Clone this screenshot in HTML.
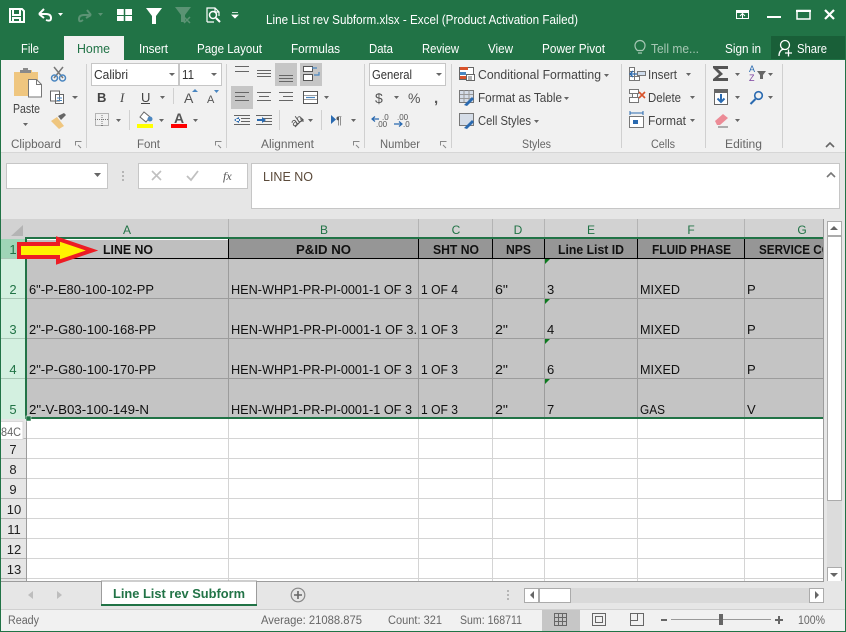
<!DOCTYPE html>
<html><head><meta charset="utf-8"><title>Line List rev Subform.xlsx - Excel</title>
<style>
html,body{margin:0;padding:0;background:#f1f1f1;width:846px;height:632px;overflow:hidden}
svg{display:block;font-family:"Liberation Sans",sans-serif}
text{white-space:pre}
.w{fill:#fff;font-size:12.500px}
.u{fill:#444;font-size:12.500px}
.l{fill:#666;font-size:11.500px}
.h{fill:#111;font-size:13px;font-weight:bold}
.c{fill:#111;font-size:13px}
.ch{fill:#217346;font-size:12px;text-anchor:middle}
.rh{fill:#222;font-size:13px;text-anchor:middle}
.rs{fill:#217346;font-size:13px;text-anchor:middle}
.g{fill:#666}
</style></head><body>
<svg width="846" height="632" viewBox="0 0 846 632" xmlns="http://www.w3.org/2000/svg">
<defs><clipPath id="gc"><rect x="27" y="239" width="796" height="180"/></clipPath></defs>
<rect width="846" height="632" fill="#f1f1f1"/>
<!-- title bar -->
<rect width="846" height="60" fill="#217346"/>
<rect x="64" y="36" width="60" height="24" fill="#f1f1f1"/>
<rect x="771" y="36" width="74" height="23" fill="#195f38"/>
<!-- QAT -->
<path d="M10 9h12l2 2v11H10z M13 9v6h7V9 M13 22v-4h7v4" fill="none" stroke="#fff" stroke-width="2"/>
<path d="M39 14l5-5M39 14l5 4M39 14h7q5 0 5 4t-5 2" fill="none" stroke="#fff" stroke-width="2"/>
<path d="M58 13h5l-2.500 3z" fill="#fff"/>
<path d="M91 15l-4-5M91 15l-5 3M91 15h-7q-5 0-5 4t4 1" fill="none" stroke="#5b9374" stroke-width="2"/>
<path d="M98 13h5l-2.500 3z" fill="#5b9374"/>
<path d="M117 9h15v6h-15z M117 16h15v5h-15z" fill="#fff"/><path d="M124.500 9v12" stroke="#217346" stroke-width="1.500"/><path d="M120 15.500h9" stroke="#217346"/>
<path d="M146 8h16l-6 8v8h-4v-8z" fill="#fff"/>
<path d="M175 7h16l-6 8v7h-4v-7z" fill="#5b9374"/><path d="M184 17l6 6M190 17l-6 6" stroke="#5b9374" stroke-width="1.500"/>
<path d="M207 22V8h8l4 4v4 M207 22h7 M215 8v4h4" fill="none" stroke="#fff" stroke-width="1.200"/><circle cx="213" cy="15" r="3.500" fill="none" stroke="#fff" stroke-width="1.500"/><path d="M216 18l4 4" stroke="#fff" stroke-width="2"/>
<path d="M232 12.500h6M232 15h6l-3 3z" fill="#fff" stroke="#fff" stroke-width=".8"/>
<text class="w" x="266" y="24" textLength="312" lengthAdjust="spacingAndGlyphs">Line List rev Subform.xlsx - Excel (Product Activation Failed)</text>
<!-- window buttons -->
<path d="M736.500 10.500h12v8h-12z" fill="none" stroke="#fff"/><path d="M736 11h13v2h-13z" fill="#fff"/><path d="M742.500 18v-4M740 16l2.500-2.500L745 16" fill="none" stroke="#fff"/>
<rect x="767" y="16" width="14" height="2" fill="#fff"/>
<path d="M797 10.500h13V19h-13z" fill="none" stroke="#fff" stroke-width="1.500"/><rect x="796" y="10" width="15" height="2" fill="#fff"/>
<path d="M825 10l9 9M834 10l-9 9" stroke="#fff" stroke-width="2.200"/>
<!-- tabs -->
<text class="w" x="21" y="53" textLength="18" lengthAdjust="spacingAndGlyphs">File</text>
<text x="77" y="53" font-size="12.500" fill="#217346" textLength="33" lengthAdjust="spacingAndGlyphs">Home</text>
<text class="w" x="139" y="53" textLength="29" lengthAdjust="spacingAndGlyphs">Insert</text>
<text class="w" x="197" y="53" textLength="65" lengthAdjust="spacingAndGlyphs">Page Layout</text>
<text class="w" x="291" y="53" textLength="49" lengthAdjust="spacingAndGlyphs">Formulas</text>
<text class="w" x="369" y="53" textLength="24" lengthAdjust="spacingAndGlyphs">Data</text>
<text class="w" x="422" y="53" textLength="37" lengthAdjust="spacingAndGlyphs">Review</text>
<text class="w" x="488" y="53" textLength="25" lengthAdjust="spacingAndGlyphs">View</text>
<text class="w" x="542" y="53" textLength="63" lengthAdjust="spacingAndGlyphs">Power Pivot</text>
<path d="M637.500 50.500q-2.500-2-2.500-5a5 5 0 0 1 10 0q0 3-2.500 5zM638 53h4" fill="none" stroke="#a6c7b4" stroke-width="1.200"/>
<text x="651" y="53" font-size="12.500" fill="#a6c7b4" textLength="48" lengthAdjust="spacingAndGlyphs">Tell me...</text>
<text class="w" x="725" y="53" textLength="36" lengthAdjust="spacingAndGlyphs">Sign in</text>
<circle cx="785" cy="45" r="4.500" fill="none" stroke="#fff" stroke-width="1.300"/><path d="M779 56q0-6 5-7M785 53h7M788.500 49.500v7" fill="none" stroke="#fff" stroke-width="1.300"/>
<text class="w" x="797" y="53" textLength="30" lengthAdjust="spacingAndGlyphs">Share</text>

<!-- ribbon separators -->
<path d="M86.500 64v84M226.500 64v84M364.500 64v84M451.500 64v84M621.500 64v84M705.500 64v84M782.500 64v84" stroke="#d0d0d0"/>
<rect x="0" y="152" width="846" height="1" fill="#d6d6d6"/>
<rect x="0" y="153" width="846" height="66" fill="#e6e6e6"/>
<!-- clipboard -->
<path d="M14 72h6v-2h12v2h6v24H14z" fill="#efc67f"/><path d="M23 70v-2h5v2h3v3h-11v-3z" fill="#8a8a8a"/>
<path d="M28.500 79.500h8l5 5v12.500h-13z" fill="#fff" stroke="#777"/>
<path d="M36.500 79.500v5h5" fill="none" stroke="#777"/>
<text class="u" x="13" y="113" textLength="27" lengthAdjust="spacingAndGlyphs">Paste</text>
<path d="M23 123h5l-2.500 3z" class="g"/>
<path d="M54 67l9 11M63 67l-9 11" stroke="#777" stroke-width="1.500"/><circle cx="54.500" cy="78" r="3" fill="none" stroke="#4a86c0" stroke-width="1.500"/><circle cx="62.500" cy="78" r="3" fill="none" stroke="#4a86c0" stroke-width="1.500"/>
<path d="M50.500 91h9v10h-9z M55.500 94.500h8v9h-8z" fill="#fff" stroke="#666"/><path d="M57 98h5M57 100.500h5" stroke="#4a86c0"/>
<path d="M72 96h6l-3 3z" class="g"/>
<path d="M51 121l6-4 7 9-5 3z" fill="#efc67f"/><path d="M58 116l6-3 2 2-5 5z" fill="#666"/>
<!-- font -->
<rect x="91.500" y="63.500" width="87" height="22" fill="#fff" stroke="#c6c6c6"/>
<rect x="179.500" y="63.500" width="42" height="22" fill="#fff" stroke="#c6c6c6"/>
<text x="94" y="79" font-size="13" fill="#333" textLength="34" lengthAdjust="spacingAndGlyphs">Calibri</text>
<text x="182" y="79" font-size="13" fill="#333" textLength="12" lengthAdjust="spacingAndGlyphs">11</text>
<path d="M169 73h6l-3 3zM211 73h6l-3 3z" class="g"/>
<text x="97" y="102" font-size="13" font-weight="bold" fill="#444">B</text>
<text x="120" y="102" font-size="13" font-style="italic" font-family="Liberation Serif" fill="#444">I</text>
<text x="141" y="102" font-size="13" fill="#444">U</text><rect x="141" y="103" width="9" height="1" fill="#444"/>
<path d="M160 96h5l-2.500 3z" class="g"/>
<path d="M173.500 88v16" stroke="#d0d0d0"/>
<text x="184" y="103" font-size="14" fill="#555">A</text><path d="M192 92l3-3 3 3z" fill="#4a86c0"/>
<text x="207" y="103" font-size="11" fill="#555">A</text><path d="M214 90h5l-2.500 3z" fill="#4a86c0"/>
<rect x="95.500" y="113.500" width="13" height="12" fill="none" stroke="#777" stroke-dasharray="1 1"/><path d="M102 113v13M95 119.500h14" stroke="#777" stroke-dasharray="1 1"/>
<path d="M116 119h5l-2.500 3z" class="g"/>
<path d="M129.500 110v20" stroke="#d0d0d0"/>
<path d="M144 112l6 5-4 5-6-5z" fill="#fff" stroke="#666"/><circle cx="150" cy="119" r="2.500" fill="#4a86c0"/>
<rect x="137" y="124" width="16" height="4" fill="#ff0"/>
<path d="M159 119h5l-2.500 3z" class="g"/>
<text x="174" y="123" font-size="14" font-weight="bold" fill="#555">A</text>
<rect x="171" y="124" width="16" height="4" fill="#f00"/>
<path d="M193 119h5l-2.500 3z" class="g"/>
<!-- alignment -->
<rect x="275" y="63" width="22" height="23" fill="#c6c6c6"/>
<rect x="300" y="63" width="22" height="23" fill="#c6c6c6"/>
<rect x="231" y="86" width="22" height="23" fill="#c6c6c6"/>
<path d="M235 66.500h14M235 71.500h14M257 70.500h14M257 73.500h14M257 76.500h14M279 75.500h14M279 78.500h14M279 81.500h14" stroke="#666"/>
<path d="M303.500 66.500h9v5h-9zM303.500 74.500h9v6h-9z" fill="#fff" stroke="#555"/><path d="M312 68h5M319 72v3h-5" fill="none" stroke="#4a86c0" stroke-width="1.200"/>
<path d="M235 92.500h14M235 96.500h10M235 100.500h14M257 92.500h14M259 96.500h10M257 100.500h14M279 92.500h14M283 96.500h10M279 100.500h14" stroke="#666"/>
<rect x="303.500" y="91.500" width="14" height="12" fill="#fff" stroke="#555"/><path d="M304 95.500h13M304 99.500h13" stroke="#999"/><path d="M306 97.500h9" stroke="#4a86c0" stroke-width="1.200"/>
<path d="M324 96h5l-2.500 3z" class="g"/>
<path d="M234 115.500h16M241 118.500h9M241 121.500h9M234 124.500h16M256 115.500h16M263 118.500h9M263 121.500h9M256 124.500h16" stroke="#666"/>
<path d="M234 120l5-3v6zM240 119h-4v2h4zM262 119h-5v2h5zM262 117l4 3-4 3z" fill="#2a6ab0"/>
<path d="M279.500 110v20" stroke="#d0d0d0"/>
<text x="290" y="125" font-size="11" fill="#555" transform="rotate(-35 295 120)">ab</text><path d="M295 127l8-8M303 119h-3M303 119v3" stroke="#555" fill="none"/>
<path d="M308 119h5l-2.500 3z" class="g"/>
<path d="M321.500 110v20" stroke="#d0d0d0"/>
<path d="M331 115l5 4.500-5 4.500z" fill="#2a6ab0"/><text x="336" y="124" font-size="11" fill="#555">¶</text>
<path d="M351 119h5l-2.500 3z" class="g"/>
<!-- number -->
<rect x="369.500" y="63.500" width="76" height="22" fill="#fff" stroke="#c6c6c6"/>
<text x="372" y="79" font-size="13" fill="#333" textLength="40" lengthAdjust="spacingAndGlyphs">General</text>
<path d="M436 73h6l-3 3z" class="g"/>
<text x="375" y="103" font-size="14" fill="#555">$</text><path d="M394 96h5l-2.500 3z" class="g"/>
<text x="408" y="103" font-size="14" fill="#555">%</text>
<text x="434" y="103" font-size="15" font-weight="bold" fill="#555">,</text>
<text x="382" y="120" font-size="8" fill="#555">.0</text><text x="376" y="127" font-size="8" fill="#555">.00</text>
<path d="M372 119h7M375 116.500l-3 2.500 3 2.500" fill="none" stroke="#2a6ab0" stroke-width="1.200"/>
<text x="397" y="120" font-size="8" fill="#555">.00</text><text x="403" y="127" font-size="8" fill="#555">.0</text>
<path d="M394 124h8M399 121.500l3 2.500-3 2.500" fill="none" stroke="#2a6ab0" stroke-width="1.200"/>
<!-- styles -->
<path d="M459.500 67.500h14v12h-14z" fill="#fff" stroke="#666"/><rect x="460" y="67" width="8" height="3" fill="#d8532b"/><rect x="460" y="72" width="6" height="3" fill="#4a86c0"/><rect x="460" y="76" width="6" height="3" fill="#d8532b"/>
<rect x="466.500" y="74.500" width="8" height="6" fill="#fff" stroke="#666"/><path d="M468 77h4M468 79h4" stroke="#333" stroke-width=".8"/>
<text class="u" x="478" y="79" textLength="123" lengthAdjust="spacingAndGlyphs">Conditional Formatting</text>
<path d="M604 74h5l-2.500 3z" class="g"/>
<rect x="459.500" y="90.500" width="14" height="12" fill="#d5dde8" stroke="#777"/><path d="M464 90v12M469 90v12M460 94.500h13M460 98.500h13" stroke="#999"/><path d="M464 105l8-8 2 2-7 7z" fill="#2a6ab0"/>
<text class="u" x="478" y="102" textLength="84" lengthAdjust="spacingAndGlyphs">Format as Table</text>
<path d="M564 97h5l-2.500 3z" class="g"/>
<rect x="459.500" y="113.500" width="14" height="12" fill="#d5dde8" stroke="#777"/><path d="M464 128l8-8 2 2-7 7z" fill="#2a6ab0"/>
<text class="u" x="478" y="125" textLength="53" lengthAdjust="spacingAndGlyphs">Cell Styles</text>
<path d="M534 120h5l-2.500 3z" class="g"/>
<!-- cells -->
<path d="M629.500 67.500h5v4h-5zM629.500 76.500h5v4h-5zM634.500 76.500h5v4h-5zM629.500 71.500h5v5h-5z" fill="#fff" stroke="#777"/>
<rect x="637.500" y="71.500" width="8" height="4" fill="#cfdcec" stroke="#777"/><path d="M630 74h7M633 71l-3 3 3 3" fill="none" stroke="#2a6ab0" stroke-width="1.300"/>
<text class="u" x="648" y="79" textLength="29" lengthAdjust="spacingAndGlyphs">Insert</text>
<path d="M686 73h5l-2.500 3z" class="g"/>
<path d="M629.500 89.500h9v4h-9zM632.500 93.500h5v4h-5zM629.500 97.500h9v5h-9z" fill="#fff" stroke="#777"/><path d="M639 92l6 6M645 92l-6 6" stroke="#d8532b" stroke-width="1.600"/>
<text class="u" x="648" y="102" textLength="33" lengthAdjust="spacingAndGlyphs">Delete</text>
<path d="M690 96h5l-2.500 3z" class="g"/>
<path d="M630 113h13M630 111v4M643 111v4" stroke="#2a6ab0"/><rect x="629.500" y="116.500" width="14" height="11" fill="#fff" stroke="#777"/><rect x="633" y="120" width="5" height="4" fill="#2a6ab0"/>
<text class="u" x="648" y="125" textLength="38" lengthAdjust="spacingAndGlyphs">Format</text>
<path d="M690 119h5l-2.500 3z" class="g"/>
<!-- editing -->
<path d="M713 66h15v3h-10l5 5-5 4h10v3h-15v-2l6-5-6-6z" fill="#555"/>
<path d="M735 73h5l-2.500 3zM735 96h5l-2.500 3zM735 119h5l-2.500 3zM768 73h5l-2.500 3zM768 96h5l-2.500 3z" class="g"/>
<text x="749" y="72" font-size="9" fill="#2a6ab0">A</text><text x="749" y="81" font-size="9" fill="#7a3f9d">Z</text>
<path d="M757 71h9l-3 4v4h-3v-4z" fill="#666"/>
<rect x="714.500" y="89.500" width="13" height="15" fill="#fff" stroke="#666"/><rect x="715" y="90" width="12" height="3" fill="#666"/><path d="M721 94v8M717.500 98.500l3.500 3.500 3.500-3.500" fill="none" stroke="#2a6ab0" stroke-width="2"/>
<circle cx="758.500" cy="95.500" r="3.800" fill="none" stroke="#2a6ab0" stroke-width="1.600"/><path d="M755.500 99l-5 5" stroke="#2a6ab0" stroke-width="2"/>
<path d="M715 121l8-7 5 4-8 7h-3z" fill="#ec8b96"/><path d="M718 127h10" stroke="#666"/>
<!-- group labels -->
<text class="l" x="11" y="148" textLength="50" lengthAdjust="spacingAndGlyphs">Clipboard</text>
<text class="l" x="137" y="148" textLength="23" lengthAdjust="spacingAndGlyphs">Font</text>
<text class="l" x="261" y="148" textLength="53" lengthAdjust="spacingAndGlyphs">Alignment</text>
<text class="l" x="380" y="148" textLength="40" lengthAdjust="spacingAndGlyphs">Number</text>
<text class="l" x="522" y="148" textLength="29" lengthAdjust="spacingAndGlyphs">Styles</text>
<text class="l" x="651" y="148" textLength="24" lengthAdjust="spacingAndGlyphs">Cells</text>
<text class="l" x="725" y="148" textLength="37" lengthAdjust="spacingAndGlyphs">Editing</text>
<path d="M75.500 145.500v-4h6M215.500 145.500v-4h6M353.500 145.500v-4h6M440.500 145.500v-4h6M78 145l3 3M218 145l3 3M356 145l3 3M443 145l3 3" fill="none" stroke="#888"/>
<path d="M826 147l4-4 4 4" fill="none" stroke="#666" stroke-width="1.600"/>
<!-- formula bar -->
<rect x="6.500" y="163.500" width="101" height="25" fill="#fff" stroke="#c6c6c6"/>
<path d="M94 173h7l-3.500 4z" class="g"/>
<path d="M122 171h2v2h-2zM122 175h2v2h-2zM122 179h2v2h-2z" fill="#b5b5b5"/>
<rect x="138.500" y="163.500" width="109" height="25" fill="#fff" stroke="#c6c6c6"/>
<path d="M152 171l9 9M161 171l-9 9" stroke="#c0c0c0" stroke-width="1.600"/>
<path d="M187 176l4 4 7-9" fill="none" stroke="#c0c0c0" stroke-width="1.800"/>
<text x="223" y="180" font-size="12" font-style="italic" font-family="Liberation Serif" fill="#555">fx</text>
<rect x="251.500" y="163.500" width="588" height="45" fill="#fff" stroke="#c6c6c6"/>
<text x="263" y="181" font-size="13" fill="#5b4a3a" textLength="50" lengthAdjust="spacingAndGlyphs">LINE NO</text>
<path d="M827 177l4-4 4 4" fill="none" stroke="#777" stroke-width="1.600"/>

<!-- sheet backgrounds -->
<rect x="1" y="219" width="823" height="20" fill="#d2d2d2"/>
<path d="M23 225v11h-12z" fill="#b4b4b4"/>
<rect x="1" y="239" width="25" height="180" fill="#d3f0e0"/>
<rect x="1" y="239" width="25" height="20" fill="#9fd5b7"/>
<rect x="1" y="419" width="25" height="162" fill="#e6e6e6"/>
<rect x="27" y="259" width="796" height="160" fill="#c4c4c4"/>
<rect x="27" y="419" width="796" height="162" fill="#fff"/>
<rect x="27" y="239" width="201" height="19" fill="#bfbfbf"/>
<rect x="229" y="239" width="594" height="19" fill="#969696"/>
<rect x="27" y="239" width="201" height="1" fill="#fff"/>
<!-- column header separators -->
<path d="M228.500 219v18M418.500 219v18M492.500 219v18M544.500 219v18M637.500 219v18M744.500 219v18" stroke="#b4b4b4"/>
<text class="ch" x="127" y="234">A</text>
<text class="ch" x="324" y="234">B</text>
<text class="ch" x="456" y="234">C</text>
<text class="ch" x="518" y="234">D</text>
<text class="ch" x="591" y="234">E</text>
<text class="ch" x="691" y="234">F</text>
<text class="ch" x="802" y="234">G</text>
<!-- grid -->
<path d="M27 298.500h796M27 338.500h796M27 378.500h796M228.500 259v160M418.500 259v160M492.500 259v160M544.500 259v160M637.500 259v160M744.500 259v160" stroke="#9c9c9c"/>
<path d="M27 438.500h796M27 458.500h796M27 478.500h796M27 498.500h796M27 518.500h796M27 538.500h796M27 558.500h796M27 578.500h796M228.500 419v162M418.500 419v162M492.500 419v162M544.500 419v162M637.500 419v162M744.500 419v162" stroke="#d4d4d4"/>
<path d="M27 258.500h796M228.500 239v20M418.500 239v20M492.500 239v20M544.500 239v20M637.500 239v20M744.500 239v20" stroke="#000"/>
<!-- row header lines -->
<path d="M1 258.500h25M1 298.500h25M1 338.500h25M1 378.500h25" stroke="#a9c8b6"/>
<path d="M1 438.500h25M1 458.500h25M1 478.500h25M1 498.500h25M1 518.500h25M1 538.500h25M1 558.500h25M1 578.500h25" stroke="#b4b4b4"/>
<path d="M26.500 419v162" stroke="#9c9c9c"/>
<text class="rs" x="13" y="254">1</text>
<text class="rs" x="13" y="294">2</text>
<text class="rs" x="13" y="334">3</text>
<text class="rs" x="13" y="374">4</text>
<text class="rs" x="13" y="414">5</text>
<text class="rh" x="13" y="454">7</text>
<text class="rh" x="13" y="474">8</text>
<text class="rh" x="13" y="494">9</text>
<text class="rh" x="14" y="514">10</text>
<text class="rh" x="14" y="534">11</text>
<text class="rh" x="14" y="554">12</text>
<text class="rh" x="14" y="574">13</text>
<!-- error triangles -->
<path d="M545 259h5l-5 5zM545 299h5l-5 5zM545 339h5l-5 5zM545 379h5l-5 5z" fill="#0c7a1e"/>
<!-- cells -->
<g clip-path="url(#gc)">
<text class="h" x="103" y="254" textLength="50" lengthAdjust="spacingAndGlyphs">LINE NO</text>
<text class="h" x="296" y="254" textLength="55" lengthAdjust="spacingAndGlyphs">P&amp;ID NO</text>
<text class="h" x="433" y="254" textLength="46" lengthAdjust="spacingAndGlyphs">SHT NO</text>
<text class="h" x="506" y="254" textLength="25" lengthAdjust="spacingAndGlyphs">NPS</text>
<text class="h" x="558" y="254" textLength="66" lengthAdjust="spacingAndGlyphs">Line List ID</text>
<text class="h" x="652" y="254" textLength="79" lengthAdjust="spacingAndGlyphs">FLUID PHASE</text>
<text class="h" x="759" y="254" textLength="88" lengthAdjust="spacingAndGlyphs">SERVICE CODE</text>

<text class="c" x="29" y="294" textLength="125" lengthAdjust="spacingAndGlyphs">6"-P-E80-100-102-PP</text>
<text class="c" x="231" y="294" textLength="181" lengthAdjust="spacingAndGlyphs">HEN-WHP1-PR-PI-0001-1 OF 3</text>
<text class="c" x="421" y="294" textLength="37" lengthAdjust="spacingAndGlyphs">1 OF 4</text>
<text class="c" x="495" y="294" textLength="13" lengthAdjust="spacingAndGlyphs">6"</text>
<text class="c" x="547" y="294">3</text>
<text class="c" x="640" y="294" textLength="40" lengthAdjust="spacingAndGlyphs">MIXED</text>
<text class="c" x="747" y="294">P</text>

<text class="c" x="29" y="334" textLength="127" lengthAdjust="spacingAndGlyphs">2"-P-G80-100-168-PP</text>
<text class="c" x="231" y="334" textLength="186" lengthAdjust="spacingAndGlyphs">HEN-WHP1-PR-PI-0001-1 OF 3.</text>
<text class="c" x="421" y="334" textLength="37" lengthAdjust="spacingAndGlyphs">1 OF 3</text>
<text class="c" x="495" y="334" textLength="13" lengthAdjust="spacingAndGlyphs">2"</text>
<text class="c" x="547" y="334">4</text>
<text class="c" x="640" y="334" textLength="40" lengthAdjust="spacingAndGlyphs">MIXED</text>
<text class="c" x="747" y="334">P</text>

<text class="c" x="29" y="374" textLength="127" lengthAdjust="spacingAndGlyphs">2"-P-G80-100-170-PP</text>
<text class="c" x="231" y="374" textLength="181" lengthAdjust="spacingAndGlyphs">HEN-WHP1-PR-PI-0001-1 OF 3</text>
<text class="c" x="421" y="374" textLength="37" lengthAdjust="spacingAndGlyphs">1 OF 3</text>
<text class="c" x="495" y="374" textLength="13" lengthAdjust="spacingAndGlyphs">2"</text>
<text class="c" x="547" y="374">6</text>
<text class="c" x="640" y="374" textLength="40" lengthAdjust="spacingAndGlyphs">MIXED</text>
<text class="c" x="747" y="374">P</text>

<text class="c" x="29" y="414" textLength="120" lengthAdjust="spacingAndGlyphs">2"-V-B03-100-149-N</text>
<text class="c" x="231" y="414" textLength="181" lengthAdjust="spacingAndGlyphs">HEN-WHP1-PR-PI-0001-1 OF 3</text>
<text class="c" x="421" y="414" textLength="37" lengthAdjust="spacingAndGlyphs">1 OF 3</text>
<text class="c" x="495" y="414" textLength="13" lengthAdjust="spacingAndGlyphs">2"</text>
<text class="c" x="547" y="414">7</text>
<text class="c" x="640" y="414" textLength="25" lengthAdjust="spacingAndGlyphs">GAS</text>
<text class="c" x="747" y="414">V</text>
</g>
<!-- selection -->
<rect x="25" y="237" width="798" height="2" fill="#217346"/>
<rect x="25" y="237" width="2" height="182" fill="#217346"/>
<rect x="25" y="417" width="798" height="2" fill="#217346"/>
<rect x="26" y="416" width="5" height="5" fill="#217346" stroke="#fff" stroke-width=".5"/>
<!-- arrow -->
<path d="M19 244H58V239L92 250.500L58 262V257H19Z" fill="#fff200" stroke="#ed1c24" stroke-width="4" stroke-linejoin="miter"/>
<!-- tooltip -->
<rect x="-1" y="421.500" width="24" height="18" fill="#fff" stroke="#d8d8d8"/>
<text x="1" y="436" font-size="12" fill="#666" textLength="20" lengthAdjust="spacingAndGlyphs">84C</text>
<!-- vertical scroll -->
<rect x="824" y="219" width="21" height="362" fill="#e6e6e6"/>
<rect x="827" y="221" width="15" height="360" fill="#dcdcdc"/>
<rect x="827.500" y="221.500" width="14" height="14" fill="#fff" stroke="#ababab"/>
<path d="M830 230h8l-4-4z" fill="#666"/>
<rect x="827.500" y="236.500" width="14" height="264" fill="#fff" stroke="#ababab"/>
<rect x="827.500" y="567.500" width="14" height="14" fill="#fff" stroke="#ababab"/>
<path d="M830 573h8l-4 4z" fill="#666"/>
<path d="M823.500 219v362" stroke="#9c9c9c"/>
<!-- tab strip -->
<rect x="1" y="581" width="844" height="28" fill="#e6e6e6"/>
<rect x="0" y="581" width="824" height="1" fill="#9c9c9c"/>
<path d="M33 591v8l-5-4zM57 591v8l5-4z" fill="#bdbdbd"/>
<rect x="101.500" y="581" width="155" height="24" fill="#fff" stroke="#9c9c9c"/>
<rect x="101" y="604" width="156" height="2" fill="#217346"/>
<text x="113" y="598" font-size="13" font-weight="bold" fill="#217346" textLength="132" lengthAdjust="spacingAndGlyphs">Line List rev Subform</text>
<circle cx="298" cy="595" r="6.800" fill="none" stroke="#888" stroke-width="1.200"/>
<path d="M298 591v8M294 595h8" stroke="#666" stroke-width="1.600"/>
<path d="M507 590h2v2h-2zM507 594h2v2h-2zM507 598h2v2h-2z" fill="#b5b5b5"/>
<rect x="524" y="588" width="300" height="15" fill="#d9d9d9"/>
<rect x="524.500" y="588.500" width="14" height="14" fill="#fff" stroke="#ababab"/>
<path d="M534 591v8l-4-4z" fill="#666"/>
<rect x="539.500" y="588.500" width="31" height="14" fill="#fff" stroke="#ababab"/>
<rect x="809.500" y="588.500" width="14" height="14" fill="#fff" stroke="#ababab"/>
<path d="M815 591v8l4-4z" fill="#666"/>
<!-- status bar -->
<rect x="1" y="609" width="844" height="22" fill="#f1f1f1"/>
<rect x="1" y="609" width="844" height="1" fill="#d0d0d0"/>
<rect x="542" y="610" width="38" height="21" fill="#c6c6c6"/>
<text class="l" x="8" y="624" textLength="31" lengthAdjust="spacingAndGlyphs">Ready</text>
<text class="l" x="261" y="624" textLength="101" lengthAdjust="spacingAndGlyphs">Average: 21088.875</text>
<text class="l" x="388" y="624" textLength="54" lengthAdjust="spacingAndGlyphs">Count: 321</text>
<text class="l" x="460" y="624" textLength="62" lengthAdjust="spacingAndGlyphs">Sum: 168711</text>
<path d="M554.500 613.500h12v12h-12zM558.500 613.500v12M562.500 613.500v12M554.500 617.500h12M554.500 621.500h12" fill="none" stroke="#666"/>
<path d="M592.500 613.500h13v12h-13zM595.500 616.500h7v6h-7z" fill="none" stroke="#666"/>
<path d="M630.500 613.500h13v12h-13zM630.500 620.500h7v-7" fill="none" stroke="#666"/>
<rect x="661" y="619" width="6" height="2" fill="#666"/>
<rect x="671" y="619" width="100" height="1" fill="#999"/>
<rect x="719" y="614" width="4" height="11" fill="#666"/>
<path d="M775 620h8M779 616v8" stroke="#666" stroke-width="2"/>
<text class="l" x="798" y="624" textLength="27" lengthAdjust="spacingAndGlyphs">100%</text>
<!-- window border -->
<path d="M.5 60v572M845.500 60v572M0 631.500h846" stroke="#217346"/>
</svg>
</body></html>
